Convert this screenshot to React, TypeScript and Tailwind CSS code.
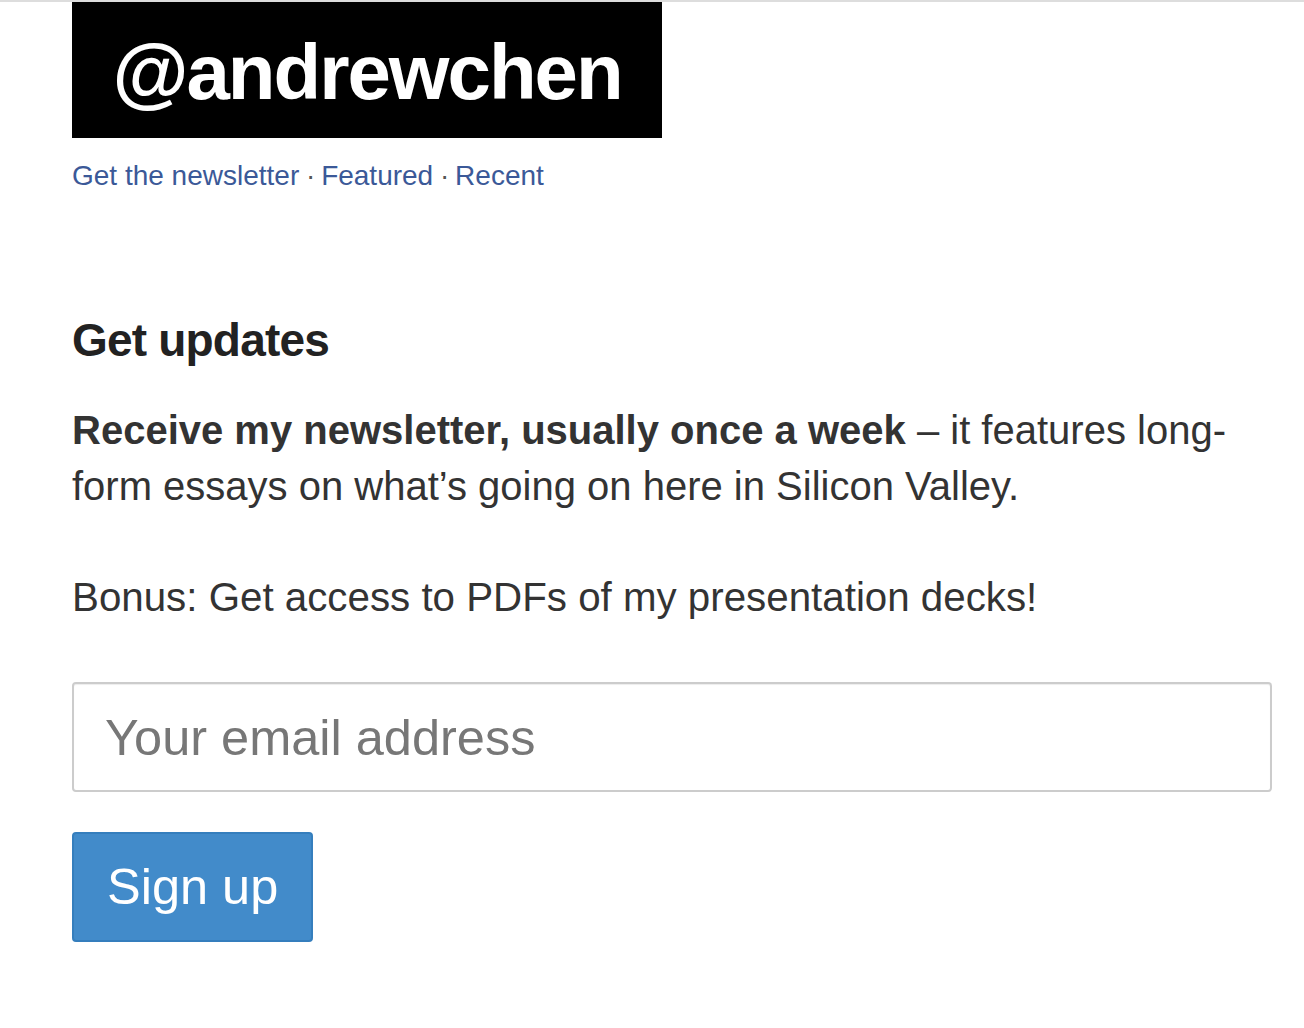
import React from 'react';

const navLinks = ['Get the newsletter', 'Featured', 'Recent'];

export default function App() {
    return (
        <div className="min-h-screen bg-white border-t-2 border-[#dddddd] font-['Liberation_Sans',Arial,sans-serif] text-[#333333]">
            <div className="ml-[72px] w-[1200px]">
                {/* Logo */}
                <div className="w-[590px] h-[136px] bg-black flex items-center justify-center">
                    <span className="text-white font-bold text-[78px] leading-none tracking-[-2px] mt-[4px]">
                        @andrewchen
                    </span>
                </div>

                {/* Nav */}
                <nav className="mt-[18px] text-[28px] leading-[40px] text-[#3b5998]">
                    {navLinks.map((link, i) => (
                        <React.Fragment key={link}>
                            {i > 0 && <span className="text-[#555555] tracking-[-1px]"> · </span>}
                            <a href="#" className="hover:underline">{link}</a>
                        </React.Fragment>
                    ))}
                </nav>

                {/* Signup */}
                <h2 className="mt-[119px] text-[46px] leading-[50px] font-bold tracking-[-0.8px] text-[#222222]">
                    Get updates
                </h2>
                <p className="mt-[37px] text-[40px] leading-[56px]">
                    <strong className="font-bold">Receive my newsletter, usually once a week</strong> – it features long-form essays on what’s going on here in Silicon Valley.
                </p>
                <p className="mt-[56px] text-[40.3px] leading-[56px]">
                    Bonus: Get access to PDFs of my presentation decks!
                </p>

                <form className="mt-[56px]" onSubmit={(e) => e.preventDefault()}>
                    <input
                        type="email"
                        placeholder="Your email address"
                        className="block w-full h-[110px] px-[31px] text-[50.5px] text-[#333333] placeholder:text-[#777777] border-2 border-[#cccccc] rounded-[4px] shadow-[inset_0_1px_1px_rgba(0,0,0,0.075)] outline-none"
                    />
                    <button
                        type="submit"
                        className="mt-[40px] h-[110px] px-[33px] text-[50.5px] text-white bg-[#428bca] border-2 border-[#357ebd] rounded-[4px]"
                    >
                        Sign up
                    </button>
                </form>
            </div>
        </div>
    );
}
